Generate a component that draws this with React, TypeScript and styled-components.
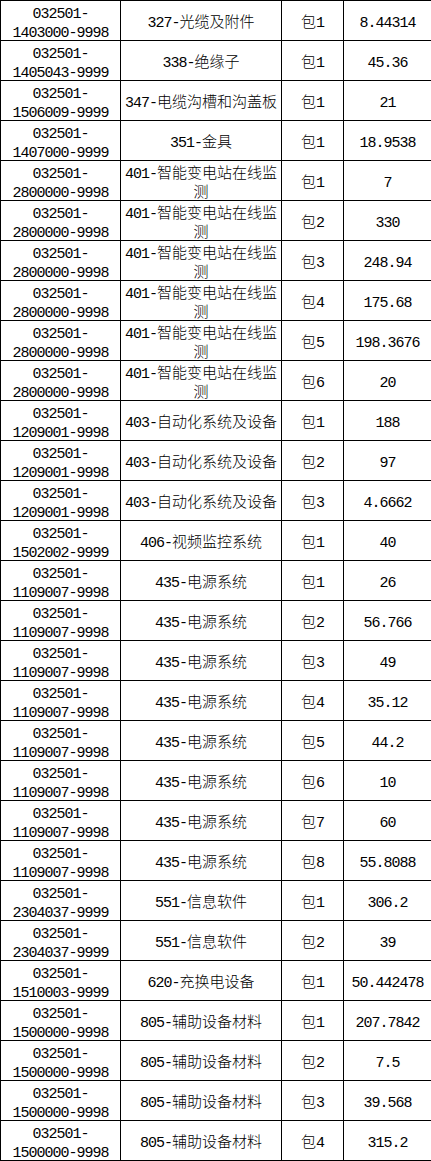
import React from 'react'
import styled, { createGlobalStyle } from 'styled-components'

const GlobalStyle = createGlobalStyle`
  html, body {
    margin: 0;
    padding: 0;
    background: #fff;
  }
`

const Table = styled.table`
  width: 431px;
  table-layout: fixed;
  border-collapse: collapse;
  font-family: 'Noto Sans CJK SC', 'Liberation Mono', monospace;
  font-size: 15px;
  font-weight: 300;
  line-height: 19px;
  color: #000;
`

const Col = styled.col<{ $w: number }>`
  width: ${p => p.$w}px;
`

const Cell = styled.td`
  height: 40px;
  padding: 0 3px;
  border: 1px solid #000;
  text-align: center;
  vertical-align: middle;
  box-sizing: border-box;
  overflow: hidden;
`

const Latin = styled.span`
  font-family: 'Liberation Mono', monospace;
  font-weight: 400;
  letter-spacing: -1px;
  line-height: 0;
`

type Row = {
  code: [string, string]
  name: string
  pkg: string
  amount: string
}

const rows: Row[] = [
  { code: ['032501-', '1403000-9998'], name: '327-光缆及附件', pkg: '包1', amount: '8.44314' },
  { code: ['032501-', '1405043-9999'], name: '338-绝缘子', pkg: '包1', amount: '45.36' },
  { code: ['032501-', '1506009-9999'], name: '347-电缆沟槽和沟盖板', pkg: '包1', amount: '21' },
  { code: ['032501-', '1407000-9999'], name: '351-金具', pkg: '包1', amount: '18.9538' },
  { code: ['032501-', '2800000-9998'], name: '401-智能变电站在线监测', pkg: '包1', amount: '7' },
  { code: ['032501-', '2800000-9998'], name: '401-智能变电站在线监测', pkg: '包2', amount: '330' },
  { code: ['032501-', '2800000-9998'], name: '401-智能变电站在线监测', pkg: '包3', amount: '248.94' },
  { code: ['032501-', '2800000-9998'], name: '401-智能变电站在线监测', pkg: '包4', amount: '175.68' },
  { code: ['032501-', '2800000-9998'], name: '401-智能变电站在线监测', pkg: '包5', amount: '198.3676' },
  { code: ['032501-', '2800000-9998'], name: '401-智能变电站在线监测', pkg: '包6', amount: '20' },
  { code: ['032501-', '1209001-9998'], name: '403-自动化系统及设备', pkg: '包1', amount: '188' },
  { code: ['032501-', '1209001-9998'], name: '403-自动化系统及设备', pkg: '包2', amount: '97' },
  { code: ['032501-', '1209001-9998'], name: '403-自动化系统及设备', pkg: '包3', amount: '4.6662' },
  { code: ['032501-', '1502002-9999'], name: '406-视频监控系统', pkg: '包1', amount: '40' },
  { code: ['032501-', '1109007-9998'], name: '435-电源系统', pkg: '包1', amount: '26' },
  { code: ['032501-', '1109007-9998'], name: '435-电源系统', pkg: '包2', amount: '56.766' },
  { code: ['032501-', '1109007-9998'], name: '435-电源系统', pkg: '包3', amount: '49' },
  { code: ['032501-', '1109007-9998'], name: '435-电源系统', pkg: '包4', amount: '35.12' },
  { code: ['032501-', '1109007-9998'], name: '435-电源系统', pkg: '包5', amount: '44.2' },
  { code: ['032501-', '1109007-9998'], name: '435-电源系统', pkg: '包6', amount: '10' },
  { code: ['032501-', '1109007-9998'], name: '435-电源系统', pkg: '包7', amount: '60' },
  { code: ['032501-', '1109007-9998'], name: '435-电源系统', pkg: '包8', amount: '55.8088' },
  { code: ['032501-', '2304037-9999'], name: '551-信息软件', pkg: '包1', amount: '306.2' },
  { code: ['032501-', '2304037-9999'], name: '551-信息软件', pkg: '包2', amount: '39' },
  { code: ['032501-', '1510003-9999'], name: '620-充换电设备', pkg: '包1', amount: '50.442478' },
  { code: ['032501-', '1500000-9998'], name: '805-辅助设备材料', pkg: '包1', amount: '207.7842' },
  { code: ['032501-', '1500000-9998'], name: '805-辅助设备材料', pkg: '包2', amount: '7.5' },
  { code: ['032501-', '1500000-9998'], name: '805-辅助设备材料', pkg: '包3', amount: '39.568' },
  { code: ['032501-', '1500000-9998'], name: '805-辅助设备材料', pkg: '包4', amount: '315.2' },
]

// ascii runs get the narrow mono face, CJK stays on Noto
const Txt: React.FC<{ text: string }> = ({ text }) => (
  <>
    {text.split(/([\x00-\x7f]+)/).map((part, i) =>
      /^[\x00-\x7f]+$/.test(part) ? <Latin key={i}>{part}</Latin> : part
    )}
  </>
)

const App: React.FC = () => (
  <>
    <GlobalStyle />
    <Table>
      <colgroup>
        <Col $w={120} />
        <Col $w={161} />
        <Col $w={62} />
        <Col $w={88} />
      </colgroup>
      <tbody>
        {rows.map((r, i) => (
          <tr key={i}>
            <Cell>
              <Txt text={r.code[0]} />
              <br />
              <Txt text={r.code[1]} />
            </Cell>
            <Cell>
              <Txt text={r.name} />
            </Cell>
            <Cell>
              <Txt text={r.pkg} />
            </Cell>
            <Cell>
              <Txt text={r.amount} />
            </Cell>
          </tr>
        ))}
      </tbody>
    </Table>
  </>
)

export default App
